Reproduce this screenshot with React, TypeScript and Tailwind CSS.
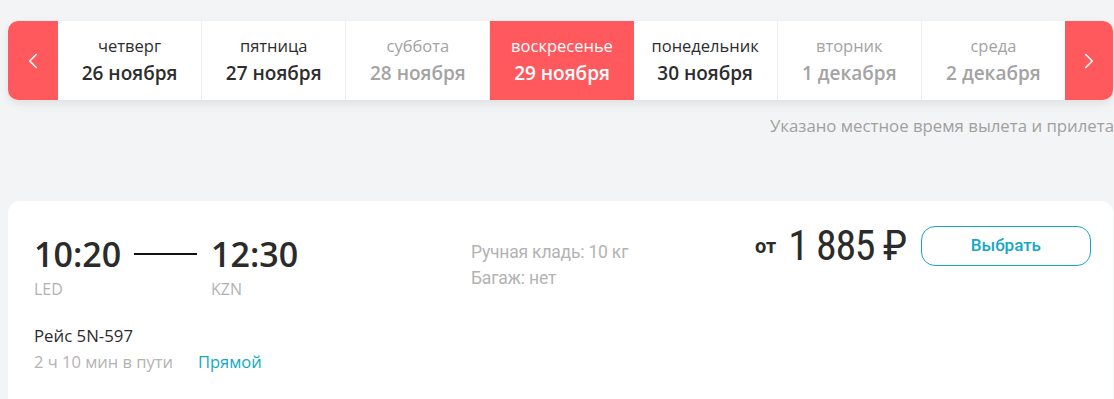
import React from "react";
import { ChevronLeft, ChevronRight } from "lucide-react";

type Day = { weekday: string; date: string; state: "normal" | "muted" | "active" };

const days: Day[] = [
  { weekday: "четверг", date: "26 ноября", state: "normal" },
  { weekday: "пятница", date: "27 ноября", state: "normal" },
  { weekday: "суббота", date: "28 ноября", state: "muted" },
  { weekday: "воскресенье", date: "29 ноября", state: "active" },
  { weekday: "понедельник", date: "30 ноября", state: "normal" },
  { weekday: "вторник", date: "1 декабря", state: "muted" },
  { weekday: "среда", date: "2 декабря", state: "muted" },
];

function DayCell({ d, last }: { d: Day; last: boolean }) {
  const bg = d.state === "active" ? "bg-[#ff585d]" : "bg-white";
  const border = last || d.state === "active" ? "" : "border-r border-[#eeeeee]";
  const color =
    d.state === "active" ? "text-white" : d.state === "muted" ? "text-[#a3a3a3]" : "text-[#2d2d2d]";
  return (
    <div className={`flex flex-1 flex-col items-center justify-center ${bg} ${border}`}>
      <div className={`text-[16.5px] leading-[20px] ${color}`}>{d.weekday}</div>
      <div className={`mt-[5px] text-[19px] font-semibold leading-[24px] ${color}`}>{d.date}</div>
    </div>
  );
}

export default function App() {
  return (
    <div className="min-h-[399px] w-[1114px] overflow-hidden bg-[#f3f4f6] font-['Open_Sans',sans-serif]">
      <div className="pl-[8px] pr-[1px] pt-[21px]">
        <div className="flex h-[79px] overflow-hidden rounded-[10px] bg-white shadow-[0_4px_10px_rgba(0,0,0,0.08)]">
          <button className="flex w-[50px] shrink-0 items-center justify-center bg-[#ff585d] text-white">
            <ChevronLeft className="h-[26px] w-[26px]" strokeWidth={1.5} />
          </button>
          {days.map((d, i) => (
            <DayCell key={d.date} d={d} last={i === days.length - 1} />
          ))}
          <button className="flex w-[48px] shrink-0 items-center justify-center bg-[#ff585d] text-white">
            <ChevronRight className="h-[26px] w-[26px]" strokeWidth={1.5} />
          </button>
        </div>
      </div>

      <div className="mt-[16px] flex justify-end whitespace-nowrap text-[16.8px] leading-[20px] text-[#a0a0a0]">
        Указано местное время вылета и прилета
      </div>

      <div className="mt-[65px] pl-[8px] pr-[1px]">
        <div className="flex h-[220px] rounded-[12px] bg-white px-[26px] pt-[25px]">
          <div className="mt-[8px] w-[437px] shrink-0">
            <div className="flex items-center">
              <div className="w-[100px] text-[34px] font-semibold leading-[40px] text-[#2b2b2b]">10:20</div>
              <div className="h-[2px] w-[63px] bg-[#111111]" />
              <div className="ml-[14px] text-[34px] font-semibold leading-[40px] text-[#2b2b2b]">12:30</div>
            </div>
            <div className="mt-[5px] flex text-[16px] leading-[20px] text-[#b3b3b3]">
              <div className="w-[177px]">LED</div>
              <div>KZN</div>
            </div>
            <div className="mt-[27px] text-[16.8px] leading-[20px] text-[#2b2b2b]">Рейс 5N-597</div>
            <div className="mt-[6px] flex whitespace-nowrap text-[16.5px] leading-[20px]">
              <div className="w-[164px] text-[#b3b3b3]">2 ч 10 мин в пути</div>
              <div className="text-[#14a8c4]">Прямой</div>
            </div>
          </div>

          <div className="w-[284px] shrink-0 pt-[16px] font-['Roboto',sans-serif] text-[17.5px] leading-[20px] text-[#b3b3b3]">
            <div className="whitespace-nowrap tracking-[-0.2px]">Ручная кладь: 10 кг</div>
            <div className="mt-[6px] tracking-[-0.2px]">Багаж: нет</div>
          </div>

          <div className="flex h-[40px] shrink-0 items-center whitespace-nowrap">
            <span className="font-['Roboto',sans-serif] text-[20px] font-bold leading-[24px] text-[#2b2b2b]">от</span>
            <span className="ml-[12px] font-['Liberation_Sans_Narrow','Roboto_Condensed','Roboto',sans-serif] text-[42px] font-normal leading-[40px] tracking-[-1.3px] text-[#2b2b2b]">
              1 885 ₽
            </span>
            <button className="ml-[15px] h-[40px] w-[170px] shrink-0 rounded-[14px] border border-[#14a8c4] font-['Roboto',sans-serif] text-[17px] font-medium text-[#14a8c4]">
              Выбрать
            </button>
          </div>
        </div>
      </div>
    </div>
  );
}
